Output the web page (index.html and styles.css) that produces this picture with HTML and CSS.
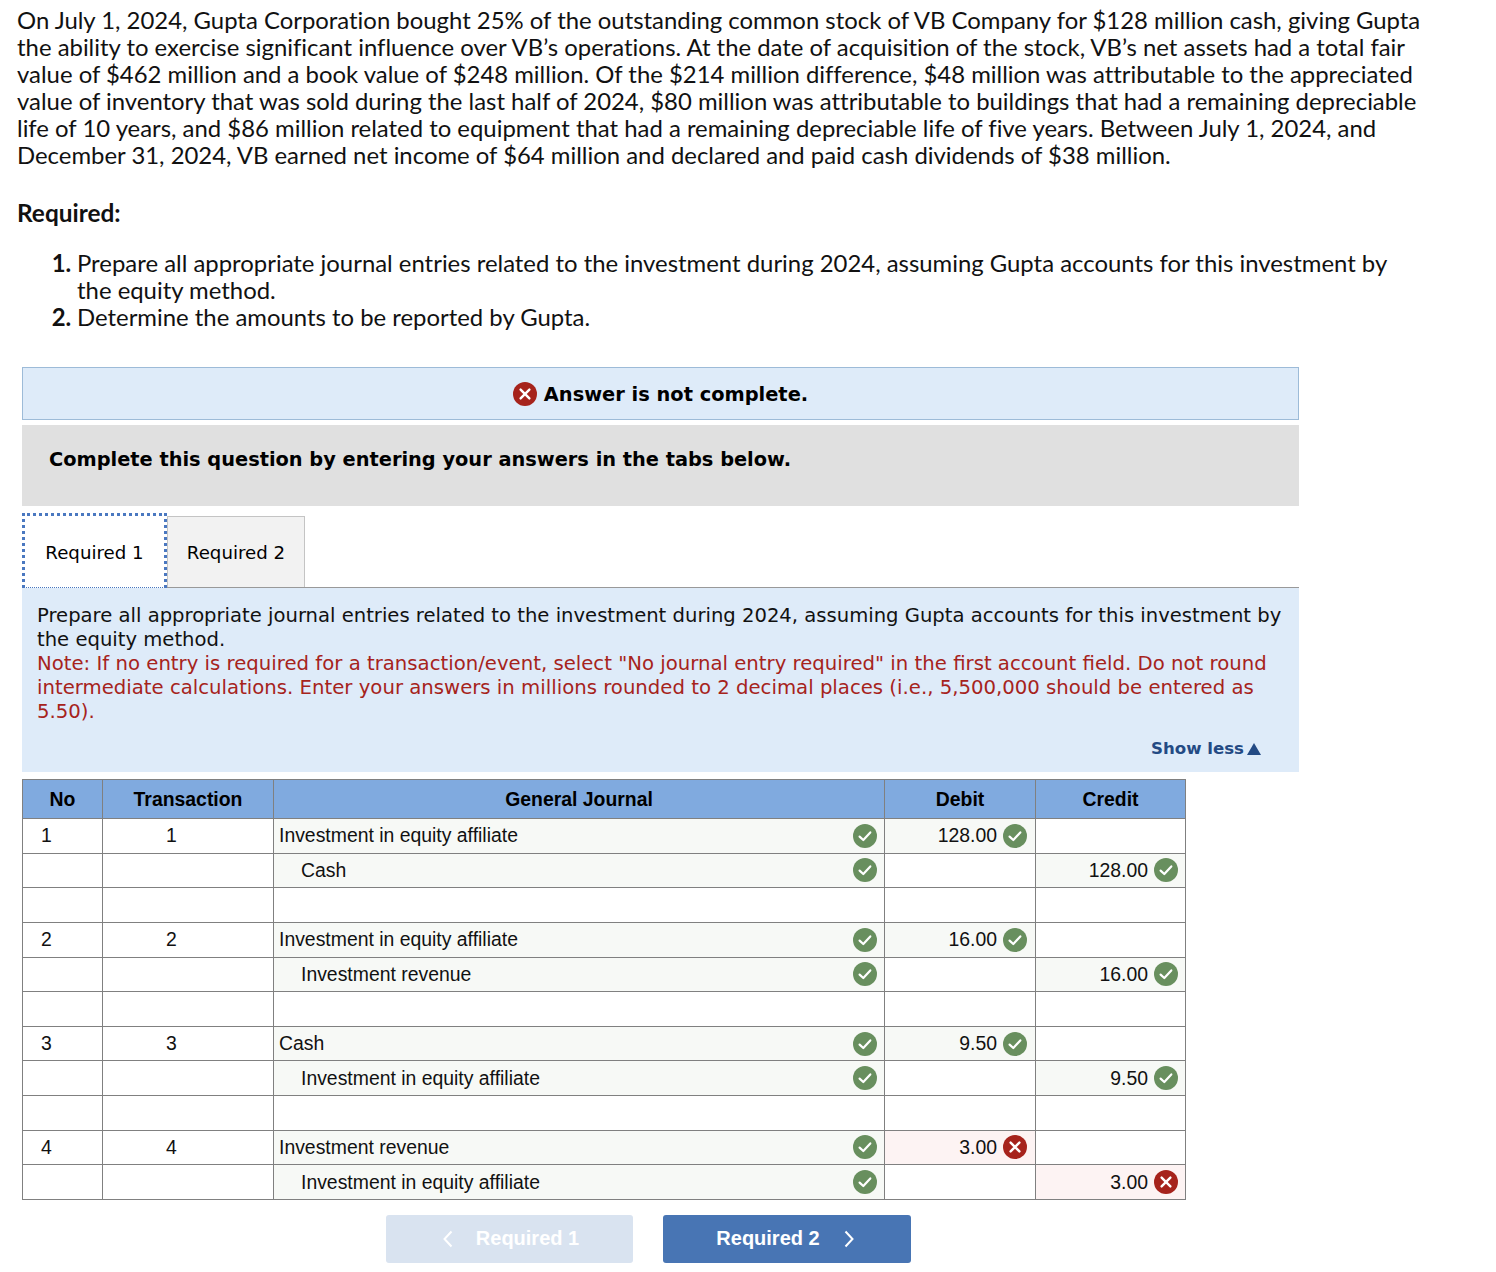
FILE: index.html
```html
<!DOCTYPE html>
<html lang="en">
<head>
<meta charset="utf-8">
<title>Equity method question</title>
<link rel="stylesheet" href="styles.css">
</head>
<body>
<svg class="defs" width="0" height="0" aria-hidden="true">
  <symbol id="ok" viewBox="0 0 24 24"><circle cx="12" cy="12" r="12" fill="#688f5e"/><path d="M6.6 12.6l3.7 3.4 7-7.6" fill="none" stroke="#fff" stroke-width="2.2" stroke-linecap="round" stroke-linejoin="round"/></symbol>
  <symbol id="bad" viewBox="0 0 24 24"><circle cx="12" cy="12" r="12" fill="#a6231c"/><path d="M7.6 7.6l8.8 8.8M16.4 7.6l-8.8 8.8" fill="none" stroke="#fff" stroke-width="2.4" stroke-linecap="round"/></symbol>
</svg>
<main class="page">
  <section class="question">
    <p class="intro">On July 1, 2024, Gupta Corporation bought 25% of the outstanding common stock of VB Company for $128 million cash, giving Gupta the ability to exercise significant influence over VB’s operations. At the date of acquisition of the stock, VB’s net assets had a total fair value of $462 million and a book value of $248 million. Of the $214 million difference, $48 million was attributable to the appreciated value of inventory that was sold during the last half of 2024, $80 million was attributable to buildings that had a remaining depreciable life of 10 years, and $86 million related to equipment that had a remaining depreciable life of five years. Between July 1, 2024, and December 31, 2024, VB earned net income of $64 million and declared and paid cash dividends of $38 million.</p>
    <h2 class="required">Required:</h2>
    <ol class="steps">
      <li>Prepare all appropriate journal entries related to the investment during 2024, assuming Gupta accounts for this investment by the equity method.</li>
      <li>Determine the amounts to be reported by Gupta.</li>
    </ol>
  </section>
  <section class="work">
    <div class="status"><svg class="icon"><use href="#bad"/></svg><strong>Answer is not complete.</strong></div>
    <div class="instruction"><strong>Complete this question by entering your answers in the tabs below.</strong></div>
    <div class="tabs">
      <div class="tab tab-active">Required 1</div>
      <div class="tab">Required 2</div>
    </div>
    <div class="panel">
      <p>Prepare all appropriate journal entries related to the investment during 2024, assuming Gupta accounts for this investment by the equity method.</p>
      <p class="note">Note: If no entry is required for a transaction/event, select "No journal entry required" in the first account field. Do not round intermediate calculations. Enter your answers in millions rounded to 2 decimal places (i.e., 5,500,000 should be entered as 5.50).</p>
      <div class="show-less"><span>Show less</span><span class="tri"></span></div>
    </div>
    <table class="journal">
      <colgroup><col class="c-no"><col class="c-tx"><col class="c-gj"><col class="c-amt"><col class="c-amt2"></colgroup>
      <thead><tr><th>No</th><th>Transaction</th><th>General Journal</th><th>Debit</th><th>Credit</th></tr></thead>
      <tbody>
        <tr><td class="no">1</td><td class="tx">1</td><td class="acct fill"><div class="line"><span>Investment in equity affiliate</span><svg class="icon"><use href="#ok"/></svg></div></td><td class="amt fill"><div class="num">128.00<svg class="icon"><use href="#ok"/></svg></div></td><td></td></tr>
        <tr><td></td><td></td><td class="acct fill"><div class="line in"><span>Cash</span><svg class="icon"><use href="#ok"/></svg></div></td><td></td><td class="amt fill"><div class="num">128.00<svg class="icon"><use href="#ok"/></svg></div></td></tr>
        <tr><td></td><td></td><td></td><td></td><td></td></tr>
        <tr><td class="no">2</td><td class="tx">2</td><td class="acct fill"><div class="line"><span>Investment in equity affiliate</span><svg class="icon"><use href="#ok"/></svg></div></td><td class="amt fill"><div class="num">16.00<svg class="icon"><use href="#ok"/></svg></div></td><td></td></tr>
        <tr><td></td><td></td><td class="acct fill"><div class="line in"><span>Investment revenue</span><svg class="icon"><use href="#ok"/></svg></div></td><td></td><td class="amt fill"><div class="num">16.00<svg class="icon"><use href="#ok"/></svg></div></td></tr>
        <tr><td></td><td></td><td></td><td></td><td></td></tr>
        <tr><td class="no">3</td><td class="tx">3</td><td class="acct fill"><div class="line"><span>Cash</span><svg class="icon"><use href="#ok"/></svg></div></td><td class="amt fill"><div class="num">9.50<svg class="icon"><use href="#ok"/></svg></div></td><td></td></tr>
        <tr><td></td><td></td><td class="acct fill"><div class="line in"><span>Investment in equity affiliate</span><svg class="icon"><use href="#ok"/></svg></div></td><td></td><td class="amt fill"><div class="num">9.50<svg class="icon"><use href="#ok"/></svg></div></td></tr>
        <tr><td></td><td></td><td></td><td></td><td></td></tr>
        <tr><td class="no">4</td><td class="tx">4</td><td class="acct fill"><div class="line"><span>Investment revenue</span><svg class="icon"><use href="#ok"/></svg></div></td><td class="amt err"><div class="num">3.00<svg class="icon"><use href="#bad"/></svg></div></td><td></td></tr>
        <tr><td></td><td></td><td class="acct fill"><div class="line in"><span>Investment in equity affiliate</span><svg class="icon"><use href="#ok"/></svg></div></td><td></td><td class="amt err"><div class="num">3.00<svg class="icon"><use href="#bad"/></svg></div></td></tr>
      </tbody>
    </table>
    <nav class="pager">
      <button class="btn btn-off" type="button"><svg class="chev" viewBox="0 0 10 18"><path d="M8.5 1.5L1.5 9l7 7.5"/></svg><span>Required 1</span></button>
      <button class="btn btn-on" type="button"><span>Required 2</span><svg class="chev" viewBox="0 0 10 18"><path d="M1.5 1.5l7 7.5-7 7.5"/></svg></button>
    </nav>
  </section>
</main>
</body>
</html>
```
FILE: styles.css
```css
* { box-sizing: border-box; }
html, body { margin: 0; background: #fff; color: #111; }
.defs { position: absolute; }
.page { width: 1496px; height: 1272px; overflow: hidden; }

.question { padding: 6px 0 0 17px; font-family: Lato, "Open Sans", sans-serif; font-size: 23.9px; line-height: 27px; font-variant-ligatures: none; }
.intro { margin: 0; width: 1410px; }
.required { margin: 31px 0 0; font-size: 24.4px; line-height: 27px; font-weight: 700; }
.steps { margin: 23px 0 0; padding: 0 0 0 60px; width: 1390px; }
.steps li { padding: 0; }
.steps li::marker { font-weight: 700; }

.work { margin: 37px 0 0 22px; width: 1277px; font-family: "DejaVu Sans", Verdana, sans-serif; }
.status { height: 53px; padding-top: 1px; display: flex; align-items: center; justify-content: center; gap: 7px; background: #deebf9; border: 1px solid #9dbbd8; font-size: 19.4px; color: #000; }
.status .icon { margin-top: -1px; }
.instruction { height: 81px; margin-top: 5px; padding: 23px 27px 0; background: #e0e0e0; font-size: 19.37px; line-height: 24px; color: #000; }
.icon { width: 24px; height: 24px; flex: none; display: block; }

.tabs { display: flex; align-items: flex-end; height: 71px; margin-top: 10px; position: relative; font-size: 18.2px; color: #000; }
.tab { width: 138px; height: 71px; display: flex; align-items: center; justify-content: center; background: #f2f2f2; border: 1px solid #c4c4c4; border-bottom: 0; }
.tab-active { width: 145px; height: 75px; padding-top: 1px; position: relative; z-index: 1; margin-bottom: -1px; background: #fff; border-style: dotted; border-color: #4a78c0; border-width: 3px 3px 1px 3px; }

.panel { height: 185px; padding: 16px 15px 0; background: #deebf9; border-top: 1px solid #999; font-size: 19.6px; line-height: 24px; color: #111; }
.panel p { margin: 0; }
.panel .note { color: #a6231c; font-size: 19.7px; }
.show-less { display: flex; justify-content: flex-end; align-items: center; gap: 3px; margin: 13px 23px 0 0; font-size: 16.6px; font-weight: 700; line-height: 24px; color: #234a84; }
.tri { width: 0; height: 0; border-left: 7px solid transparent; border-right: 7px solid transparent; border-bottom: 12px solid #234a84; }

.journal { width: 1163px; margin-top: 7px; border-collapse: collapse; table-layout: fixed; font-family: "Liberation Sans", Arial, sans-serif; font-size: 19.4px; color: #111; }
.c-no { width: 80px; }
.c-tx { width: 171px; }
.c-gj { width: 611px; }
.c-amt { width: 151px; }
.c-amt2 { width: 150px; }
.journal th, .journal td { border: 1px solid #808080; padding: 0; }
.journal th { height: 39px; background: #80aadf; font-weight: 700; color: #000; text-align: center; }
.journal td { height: 34.64px; }
.no { padding-left: 18px !important; }
.tx { padding-left: 63px !important; }
.fill { background: #f7f9f6; }
.err { background: #fdf3f3; }
.line { display: flex; align-items: center; justify-content: space-between; padding: 0 7px 0 5px; }
.line.in { padding-left: 27px; }
.num { display: flex; align-items: center; justify-content: flex-end; gap: 6px; padding-right: 7px; }
td:nth-child(4) .num { padding-right: 8px; }

.pager { display: flex; gap: 30px; margin: 15px 0 0 364px; }
.btn { width: 248px; height: 48px; display: flex; align-items: center; justify-content: center; gap: 24px; background: #4875b4; border: 0; border-radius: 3px; color: #fff; font-family: "Liberation Sans", Arial, sans-serif; font-size: 20px; font-weight: 700; padding: 0; }
.btn-on { padding-right: 4px; }
.btn-off { width: 247px; background: #d9e3f0; padding-left: 3px; gap: 23px; }
.chev { width: 10px; height: 18px; fill: none; stroke: #fff; stroke-width: 2; }
```
